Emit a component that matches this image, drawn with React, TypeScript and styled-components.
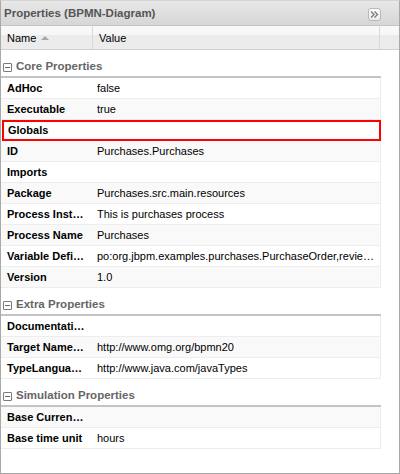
import React from "react";
import styled, { createGlobalStyle } from "styled-components";

const Global = createGlobalStyle`
  html, body { margin: 0; padding: 0; background: #fff; }
  body { font-family: "Liberation Sans", Arial, sans-serif; }
`;

const Panel = styled.div`
  width: 400px;
  height: 474px;
  box-sizing: border-box;
  border: 1px solid #a9a9a9;
  border-top-color: #d4d4d4;
  display: flex;
  flex-direction: column;
  background: #fff;
  overflow: hidden;
`;

const TitleBar = styled.div`
  height: 24px;
  flex: none;
  display: flex;
  align-items: center;
  justify-content: space-between;
  padding: 0 4px 0 3px;
  background: linear-gradient(#e8e8e8, #d6d6d6);
  border-bottom: 1px solid #c4c4c4;
`;

const Title = styled.span`
  font-size: 11.5px;
  font-weight: bold;
  color: #555;
`;

const ToolButton = styled.div`
  width: 13px;
  height: 13px;
  margin-top: 2px;
  margin-right: 14px;
  box-sizing: border-box;
  border: 1px solid #b8b8b8;
  border-radius: 3px;
  background: linear-gradient(#fdfdfd, #ececec);
  display: flex;
  align-items: center;
  justify-content: center;
`;

const HeaderRow = styled.div`
  height: 23px;
  flex: none;
  display: grid;
  grid-template-columns: 92px 287px 1fr;
  background: linear-gradient(#f9f9f9 0%, #f6f6f6 40%, #ebebeb 41%, #ececec 100%);
  border-bottom: 1px solid #d0d0d0;
`;

const HeaderCell = styled.div<{ $last?: boolean }>`
  display: flex;
  align-items: center;
  gap: 5px;
  padding-left: 6px;
  font-size: 11px;
  color: #000;
  border-right: ${(p) => (p.$last ? "none" : "1px solid #d9d9d9")};
`;

const SortArrow = styled.span`
  width: 0;
  height: 0;
  border-left: 4px solid transparent;
  border-right: 4px solid transparent;
  border-bottom: 4px solid #a8a8a8;
`;

const Body = styled.div`
  flex: 1;
  width: 380px;
  display: flex;
  flex-direction: column;
`;

const GroupHeader = styled.div`
  height: 26px;
  box-sizing: border-box;
  flex: none;
  display: flex;
  align-items: flex-start;
  gap: 4px;
  padding: 10px 0 0 3px;
  line-height: 13px;
  border-bottom: 2px solid #c4c4c4;
  font-size: 11.5px;
  font-weight: bold;
  color: #666;
  margin-left: -1px;
  height: 28px;
`;

const Collapse = styled.span`
  width: 9px;
  height: 9px;
  box-sizing: border-box;
  border: 1px solid #7a7a7a;
  border-radius: 1px;
  display: flex;
  align-items: center;
  justify-content: center;
  margin-top: 3px;
  &::after {
    content: "";
    width: 5px;
    height: 1px;
    background: #666;
  }
`;

const Row = styled.div<{ $alt: boolean; $invalid?: boolean }>`
  height: 21px;
  flex: none;
  box-sizing: border-box;
  display: grid;
  grid-template-columns: 92px 1fr;
  align-items: center;
  background: ${(p) => (p.$alt ? "#f9f9f9" : "#fff")};
  border-right: 1px solid #ededed;
  border-bottom: 1px solid #ededed;
  outline: ${(p) => (p.$invalid ? "2px solid #ff0000" : "none")};
  outline-offset: -2px;
  margin-left: ${(p) => (p.$invalid ? "1px" : "0")};
  width: ${(p) => (p.$invalid ? "379px" : "380px")};
`;

const NameCell = styled.div`
  padding-left: 6px;
  font-size: 11px;
  font-weight: bold;
  color: #000;
  white-space: nowrap;
  overflow: hidden;
`;

const ValueCell = styled.div`
  padding-left: 4px;
  padding-right: 4px;
  font-size: 11px;
  color: #000;
  white-space: nowrap;
  overflow: hidden;
`;

type Prop = { name: string; value?: string; invalid?: boolean };
type Group = { title: string; rows: Prop[] };

const groups: Group[] = [
  {
    title: "Core Properties",
    rows: [
      { name: "AdHoc", value: "false" },
      { name: "Executable", value: "true" },
      { name: "Globals", invalid: true },
      { name: "ID", value: "Purchases.Purchases" },
      { name: "Imports" },
      { name: "Package", value: "Purchases.src.main.resources" },
      { name: "Process Inst…", value: "This is purchases process" },
      { name: "Process Name", value: "Purchases" },
      {
        name: "Variable Defi…",
        value: "po:org.jbpm.examples.purchases.PurchaseOrder,revie…",
      },
      { name: "Version", value: "1.0" },
    ],
  },
  {
    title: "Extra Properties",
    rows: [
      { name: "Documentati…" },
      { name: "Target Name…", value: "http://www.omg.org/bpmn20" },
      { name: "TypeLangua…", value: "http://www.java.com/javaTypes" },
    ],
  },
  {
    title: "Simulation Properties",
    rows: [{ name: "Base Curren…" }, { name: "Base time unit", value: "hours" }],
  },
];

export default function App() {
  let idx = 0;
  return (
    <>
      <Global />
      <Panel>
        <TitleBar>
          <Title>Properties (BPMN-Diagram)</Title>
          <ToolButton>
            <svg width="9" height="7" viewBox="0 0 9 7">
              <path d="M1 0.5 L4 3.5 L1 6.5 M4.5 0.5 L7.5 3.5 L4.5 6.5" fill="none" stroke="#777" strokeWidth="1.3" />
            </svg>
          </ToolButton>
        </TitleBar>
        <HeaderRow>
          <HeaderCell>
            Name <SortArrow />
          </HeaderCell>
          <HeaderCell>Value</HeaderCell>
          <HeaderCell $last />
        </HeaderRow>
        <Body>
          {groups.map((g) => (
            <React.Fragment key={g.title}>
              <GroupHeader>
                <Collapse />
                {g.title}
              </GroupHeader>
              {g.rows.map((r) => {
                const alt = idx++ % 2 === 1;
                return (
                  <Row key={r.name} $alt={alt} $invalid={r.invalid}>
                    <NameCell>{r.name}</NameCell>
                    <ValueCell>{r.value ?? ""}</ValueCell>
                  </Row>
                );
              })}
            </React.Fragment>
          ))}
        </Body>
      </Panel>
    </>
  );
}
